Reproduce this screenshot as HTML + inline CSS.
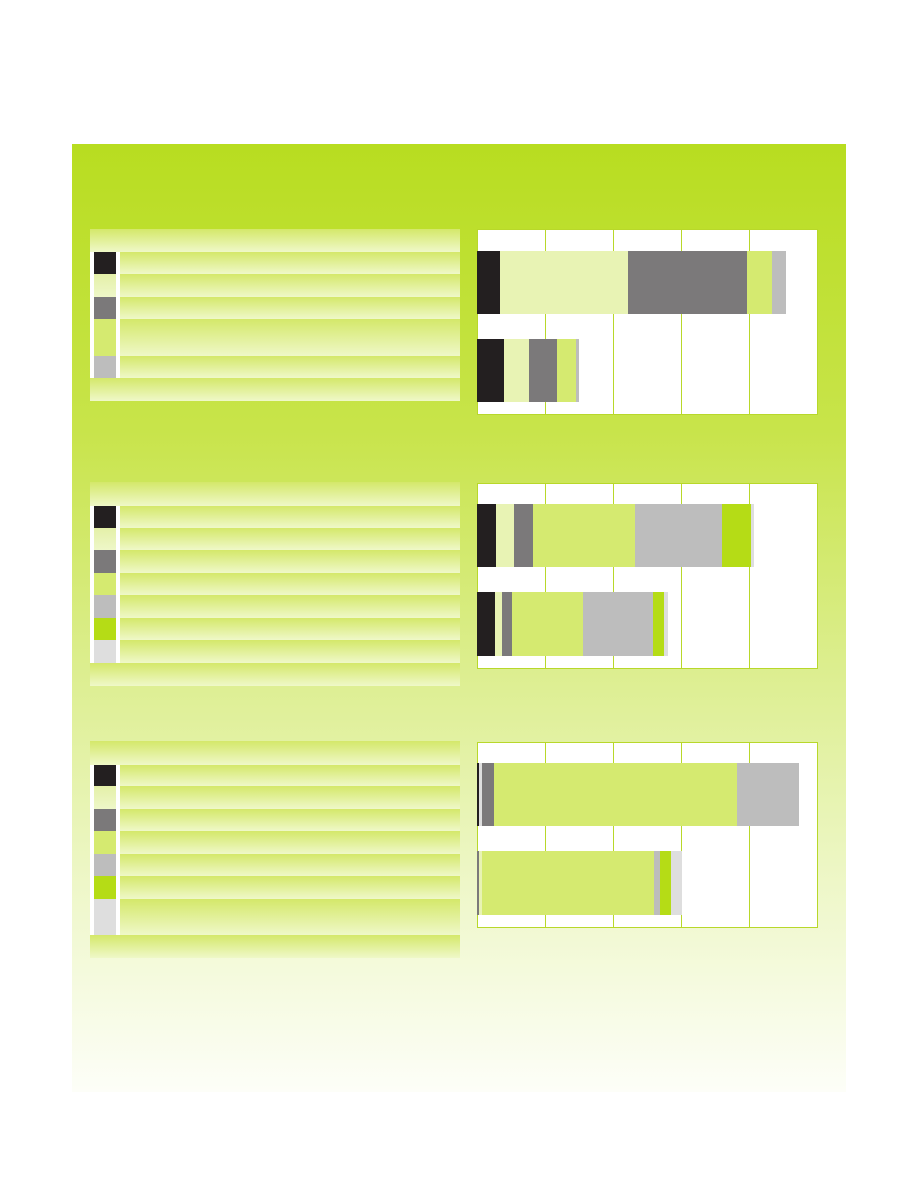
<!DOCTYPE html>
<html><head><meta charset="utf-8"><style>
*{margin:0;padding:0;box-sizing:border-box}
body{width:918px;height:1188px;background:#fff;position:relative;overflow:hidden;font-family:"Liberation Sans",sans-serif}
.panel{position:absolute;left:72px;top:144px;width:774px;height:948px;background:linear-gradient(#b8dd20 0%,#c8e44a 30%,#dcee8e 55%,#eef7c8 78%,#fdfef8 100%)}
.a{position:absolute}
.r{position:absolute;left:90px;width:370px;background:linear-gradient(#d4e86a,#eff8c8)}
.w{position:absolute;left:90px;width:30px;background:#fff}
.s{position:absolute;left:94px;width:22px}
.c{position:absolute;left:477px;width:341px;height:186px;background:#fff;border:1px solid #b8d82a}
.g{position:absolute;top:0;bottom:0;width:1px;background:#b8d82a}
.b{position:absolute}
</style></head><body>
<div class="panel"></div>

<!-- Section 1 legend -->
<div class="r" style="top:229px;height:23px"></div>
<div class="w" style="top:252px;height:126px"></div>
<div class="r" style="top:252px;height:22px;left:120px;width:340px"></div>
<div class="r" style="top:274px;height:23px;left:120px;width:340px"></div>
<div class="r" style="top:297px;height:22px;left:120px;width:340px"></div>
<div class="r" style="top:319px;height:37px;left:120px;width:340px"></div>
<div class="r" style="top:356px;height:22px;left:120px;width:340px"></div>
<div class="r" style="top:378px;height:23px"></div>
<div class="s" style="top:252px;height:22px;background:#231f20"></div>
<div class="s" style="top:274px;height:23px;background:linear-gradient(#e4f0a8,#eef7c8)"></div>
<div class="s" style="top:297px;height:22px;background:#7b797a"></div>
<div class="s" style="top:319px;height:37px;background:#d5ea70"></div>
<div class="s" style="top:356px;height:22px;background:#bdbdbd"></div>

<!-- Chart 1 -->
<div class="c" style="top:229px">
<div class="g" style="left:67px"></div><div class="g" style="left:135px"></div><div class="g" style="left:203px"></div><div class="g" style="left:271px"></div>
</div>
<div class="b" style="top:251px;height:63px;left:477px;width:23px;background:#231f20"></div>
<div class="b" style="top:251px;height:63px;left:500px;width:128px;background:#e8f3b4"></div>
<div class="b" style="top:251px;height:63px;left:628px;width:119px;background:#7b797a"></div>
<div class="b" style="top:251px;height:63px;left:747px;width:25px;background:#d5ea70"></div>
<div class="b" style="top:251px;height:63px;left:772px;width:14px;background:#bdbdbd"></div>
<div class="b" style="top:339px;height:63px;left:477px;width:27px;background:#231f20"></div>
<div class="b" style="top:339px;height:63px;left:504px;width:25px;background:#e8f3b4"></div>
<div class="b" style="top:339px;height:63px;left:529px;width:28px;background:#7b797a"></div>
<div class="b" style="top:339px;height:63px;left:557px;width:19px;background:#d5ea70"></div>
<div class="b" style="top:339px;height:63px;left:576px;width:3px;background:#bdbdbd"></div>

<!-- Section 2 legend -->
<div class="r" style="top:482px;height:24px"></div>
<div class="w" style="top:506px;height:157px"></div>
<div class="r" style="top:506px;height:22px;left:120px;width:340px"></div>
<div class="r" style="top:528px;height:22px;left:120px;width:340px"></div>
<div class="r" style="top:550px;height:23px;left:120px;width:340px"></div>
<div class="r" style="top:573px;height:22px;left:120px;width:340px"></div>
<div class="r" style="top:595px;height:23px;left:120px;width:340px"></div>
<div class="r" style="top:618px;height:22px;left:120px;width:340px"></div>
<div class="r" style="top:640px;height:23px;left:120px;width:340px"></div>
<div class="r" style="top:663px;height:23px"></div>
<div class="s" style="top:506px;height:22px;background:#231f20"></div>
<div class="s" style="top:528px;height:22px;background:linear-gradient(#e4f0a8,#eef7c8)"></div>
<div class="s" style="top:550px;height:23px;background:#7b797a"></div>
<div class="s" style="top:573px;height:22px;background:#d5ea70"></div>
<div class="s" style="top:595px;height:23px;background:#bdbdbd"></div>
<div class="s" style="top:618px;height:22px;background:#b5dc16"></div>
<div class="s" style="top:640px;height:23px;background:#dedede"></div>

<!-- Chart 2 -->
<div class="c" style="top:483px">
<div class="g" style="left:67px"></div><div class="g" style="left:135px"></div><div class="g" style="left:203px"></div><div class="g" style="left:271px"></div>
</div>
<div class="b" style="top:504px;height:63px;left:477px;width:19px;background:#231f20"></div>
<div class="b" style="top:504px;height:63px;left:496px;width:18px;background:#e8f3b4"></div>
<div class="b" style="top:504px;height:63px;left:514px;width:19px;background:#7b797a"></div>
<div class="b" style="top:504px;height:63px;left:533px;width:102px;background:#d5ea70"></div>
<div class="b" style="top:504px;height:63px;left:635px;width:87px;background:#bdbdbd"></div>
<div class="b" style="top:504px;height:63px;left:722px;width:29px;background:#b5dc16"></div>
<div class="b" style="top:504px;height:63px;left:751px;width:3px;background:#dedede"></div>
<div class="b" style="top:592px;height:64px;left:477px;width:18px;background:#231f20"></div>
<div class="b" style="top:592px;height:64px;left:495px;width:7px;background:#e8f3b4"></div>
<div class="b" style="top:592px;height:64px;left:502px;width:10px;background:#7b797a"></div>
<div class="b" style="top:592px;height:64px;left:512px;width:71px;background:#d5ea70"></div>
<div class="b" style="top:592px;height:64px;left:583px;width:70px;background:#bdbdbd"></div>
<div class="b" style="top:592px;height:64px;left:653px;width:11px;background:#b5dc16"></div>
<div class="b" style="top:592px;height:64px;left:664px;width:4px;background:#dedede"></div>

<!-- Section 3 legend -->
<div class="r" style="top:741px;height:24px"></div>
<div class="w" style="top:765px;height:170px"></div>
<div class="r" style="top:765px;height:21px;left:120px;width:340px"></div>
<div class="r" style="top:786px;height:23px;left:120px;width:340px"></div>
<div class="r" style="top:809px;height:22px;left:120px;width:340px"></div>
<div class="r" style="top:831px;height:23px;left:120px;width:340px"></div>
<div class="r" style="top:854px;height:22px;left:120px;width:340px"></div>
<div class="r" style="top:876px;height:23px;left:120px;width:340px"></div>
<div class="r" style="top:899px;height:36px;left:120px;width:340px"></div>
<div class="r" style="top:935px;height:23px"></div>
<div class="s" style="top:765px;height:21px;background:#231f20"></div>
<div class="s" style="top:786px;height:23px;background:linear-gradient(#e4f0a8,#eef7c8)"></div>
<div class="s" style="top:809px;height:22px;background:#7b797a"></div>
<div class="s" style="top:831px;height:23px;background:#d5ea70"></div>
<div class="s" style="top:854px;height:22px;background:#bdbdbd"></div>
<div class="s" style="top:876px;height:23px;background:#b5dc16"></div>
<div class="s" style="top:899px;height:36px;background:#dedede"></div>

<!-- Chart 3 -->
<div class="c" style="top:742px">
<div class="g" style="left:67px"></div><div class="g" style="left:135px"></div><div class="g" style="left:203px"></div><div class="g" style="left:271px"></div>
</div>
<div class="b" style="top:763px;height:63px;left:477px;width:2px;background:#231f20"></div>
<div class="b" style="top:763px;height:63px;left:479px;width:3px;background:#dedede"></div>
<div class="b" style="top:763px;height:63px;left:482px;width:12px;background:#7b797a"></div>
<div class="b" style="top:763px;height:63px;left:494px;width:243px;background:#d5ea70"></div>
<div class="b" style="top:763px;height:63px;left:737px;width:62px;background:#bdbdbd"></div>
<div class="b" style="top:851px;height:64px;left:477px;width:2px;background:#7b797a"></div>
<div class="b" style="top:851px;height:64px;left:479px;width:3px;background:#e8f3b4"></div>
<div class="b" style="top:851px;height:64px;left:482px;width:172px;background:#d5ea70"></div>
<div class="b" style="top:851px;height:64px;left:654px;width:6px;background:#bdbdbd"></div>
<div class="b" style="top:851px;height:64px;left:660px;width:11px;background:#b5dc16"></div>
<div class="b" style="top:851px;height:64px;left:671px;width:11px;background:#dedede"></div>
</body></html>
